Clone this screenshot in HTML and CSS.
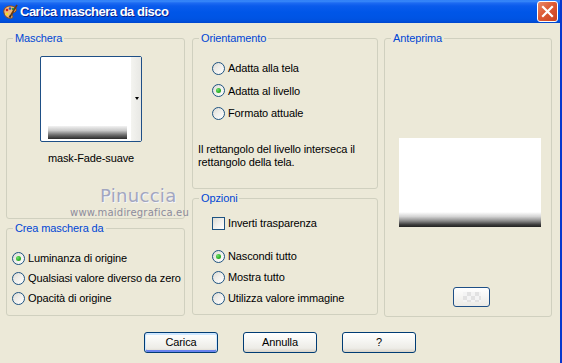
FILE: index.html
```html
<!DOCTYPE html>
<html lang="it">
<head>
<meta charset="utf-8">
<title>Carica maschera da disco</title>
<link rel="stylesheet" href="styles.css">
</head>
<body>
<div class="window">
  <div class="titlebar">
    <svg class="appicon" width="16" height="16" viewBox="0 0 16 16">
      <path d="M2 9 C1 5 4 2 8 2 C12 2 15 4 14 7 C13 9 10 8 10 10 C10 12 12 13 10 14 C6 15 3 13 2 9 Z" fill="#F0B878" stroke="#8A4A18" stroke-width="1"/>
      <circle cx="5" cy="6" r="1.3" fill="#D02020"/>
      <circle cx="8" cy="4.5" r="1.3" fill="#2050D0"/>
      <circle cx="11" cy="5" r="1.2" fill="#20A040"/>
      <circle cx="5" cy="10" r="1.3" fill="#F0E020"/>
      <path d="M15 1 L9 11" stroke="#6A3A10" stroke-width="1.6"/>
      <path d="M9 11 L7.5 13.5" stroke="#303030" stroke-width="2"/>
    </svg>
    <span class="title">Carica maschera da disco</span>
    <div class="closebtn">
      <svg width="13" height="13" viewBox="0 0 13 13"><path d="M2 2 L11 11 M11 2 L2 11" stroke="#FFFFFF" stroke-width="2.2" stroke-linecap="square"/></svg>
    </div>
  </div>

  <div class="content">
    <div class="columns">
      <div class="col col1">
        <fieldset class="grp g-mask">
          <legend>Maschera</legend>
          <div class="maskwrap">
            <div class="maskbox">
              <div class="maskthumb"><div class="maskgrad"></div></div>
              <div class="maskstrip"><span class="droparrow"></span></div>
            </div>
            <div class="masklabel">mask-Fade-suave</div>
          </div>
        </fieldset>
        <fieldset class="grp g-crea">
          <legend>Crea maschera da</legend>
          <div class="optlist crea-opts">
            <div class="opt row20"><span class="radio checked"></span><span>Luminanza di origine</span></div>
            <div class="opt row20"><span class="radio"></span><span>Qualsiasi valore diverso da zero</span></div>
            <div class="opt row20"><span class="radio"></span><span>Opacità di origine</span></div>
          </div>
        </fieldset>
      </div>

      <div class="col col2">
        <fieldset class="grp g-orient">
          <legend>Orientamento</legend>
          <div class="optlist orient-opts">
            <div class="opt row22"><span class="radio"></span><span>Adatta alla tela</span></div>
            <div class="opt row22"><span class="radio checked"></span><span>Adatta al livello</span></div>
            <div class="opt row22"><span class="radio"></span><span>Formato attuale</span></div>
          </div>
          <p class="desc">Il rettangolo del livello interseca il rettangolo della tela.</p>
        </fieldset>
        <fieldset class="grp g-opz">
          <legend>Opzioni</legend>
          <div class="optlist opz-check">
            <div class="opt row20"><span class="checkbox"></span><span>Inverti trasparenza</span></div>
          </div>
          <div class="optlist opz-opts">
            <div class="opt row21"><span class="radio checked"></span><span>Nascondi tutto</span></div>
            <div class="opt row21"><span class="radio"></span><span>Mostra tutto</span></div>
            <div class="opt row21"><span class="radio"></span><span>Utilizza valore immagine</span></div>
          </div>
        </fieldset>
      </div>

      <div class="col col3">
        <fieldset class="grp g-prev">
          <legend>Anteprima</legend>
          <div class="preview"><div class="prevgrad"></div></div>
          <div class="checkerbtn"><div class="checker"></div></div>
        </fieldset>
      </div>
    </div>

    <div class="buttons">
      <div class="btn default">Carica</div>
      <div class="btn">Annulla</div>
      <div class="btn">?</div>
    </div>
  </div>

  <div class="watermark">
    <div class="wm-name">Pinuccia</div>
    <div class="wm-url">www.maidiregrafica.eu</div>
  </div>
</div>
</body>
</html>
```

FILE: styles.css
```css
* { box-sizing: border-box; }

html, body {
  margin: 0;
  padding: 0;
  background: #ECE9D8;
}

body {
  font-family: "Liberation Sans", Arial, sans-serif;
  font-size: 11px;
  letter-spacing: -0.12px;
  color: #000;
}

.window {
  position: relative;
  width: 562px;
  height: 363px;
  background: #ECE9D8;
  border-right: 2px solid #0738CE;
  display: flex;
  flex-direction: column;
  overflow: hidden;
}

/* ---------- title bar ---------- */
.titlebar {
  height: 23px;
  flex: none;
  display: flex;
  align-items: center;
  padding-left: 2px;
  background: linear-gradient(to bottom,
    #2A78F5 0px, #3B8CFA 1px, #1D6AF2 3px, #0A5BEC 6px,
    #0056E8 12px, #0054E4 18px, #0050DD 21px, #0046CC 23px);
}

.appicon {
  flex: none;
  margin-top: 1px;
}

.title {
  margin-left: 2px;
  color: #FFFFFF;
  font-family: "Liberation Sans", Arial, sans-serif;
  font-weight: bold;
  font-size: 13px;
  letter-spacing: -0.5px;
  text-shadow: 1px 1px 0 #0A1E8C;
}

.closebtn {
  margin-left: auto;
  margin-right: 2px;
  width: 21px;
  height: 21px;
  border: 1px solid #FFFFFF;
  border-radius: 3px;
  background: linear-gradient(135deg, #E98A6A 0%, #DD5A34 45%, #C9431F 100%);
  display: flex;
  align-items: center;
  justify-content: center;
}

/* ---------- content ---------- */
.content {
  flex: 1;
  padding: 9px 0 0 6px;
  display: flex;
  flex-direction: column;
}

.columns {
  display: flex;
  align-items: flex-start;
  height: 285px;
}

.col {
  display: flex;
  flex-direction: column;
  gap: 3px;
}

.col1 { width: 179px; }
.col2 { width: 186px; margin-left: 7px; }
.col3 { width: 168px; margin-left: 6px; }

.grp {
  margin: 0;
  padding: 0;
  min-width: 0;
  border: 1px solid #D0D0BF;
  border-radius: 3px;
}

.grp legend {
  margin-left: 6px;
  padding: 0 2px;
  color: #0046D5;
  font-size: 11px;
  line-height: 13px;
}

.g-mask   { height: 187px; }
.g-crea   { height: 94px; }
.g-orient { height: 157px; }
.g-opz    { height: 123px; }
.g-prev   { height: 285px; }

/* ---------- mask picker ---------- */
.maskwrap {
  width: 102px;
  margin: 11px 0 0 33px;
}

.maskbox {
  width: 102px;
  height: 86px;
  border: 1px solid #1E4F86;
  border-radius: 2px;
  background: #FFFFFF;
  display: flex;
}

.maskthumb {
  flex: 1;
  display: flex;
  flex-direction: column;
  justify-content: flex-end;
  padding: 0 4px 2px 7px;
}

.maskgrad {
  height: 13px;
  background: linear-gradient(to bottom, #F2F2F2 0%, #C8C8C8 35%, #6A6A6A 70%, #2A2A2A 100%);
}

.maskstrip {
  width: 10px;
  background: linear-gradient(to right, #F4F4F0, #E8E8E4);
  display: flex;
  align-items: center;
  justify-content: center;
  padding-bottom: 2px;
}

.droparrow {
  width: 0;
  height: 0;
  border-left: 2.5px solid transparent;
  border-right: 2.5px solid transparent;
  border-top: 3px solid #000;
  margin-left: 1px;
}

.masklabel {
  margin-top: 10px;
  text-align: center;
  line-height: 13px;
  white-space: nowrap;
}

/* ---------- options ---------- */
.optlist {
  display: flex;
  flex-direction: column;
}

.opt {
  display: flex;
  align-items: center;
  gap: 3px;
  white-space: nowrap;
}

.row20 { height: 20px; }
.row21 { height: 21px; }
.row22 { height: 22.5px; }

.crea-opts   { padding: 13px 0 0 5px; }
.orient-opts { padding: 11.75px 0 0 19px; }
.opz-check   { padding: 8px 0 0 19px; }
.opz-opts    { padding: 12.5px 0 0 19px; }

.radio {
  flex: none;
  width: 13px;
  height: 13px;
  border: 1px solid #1D5281;
  border-radius: 50%;
  background: linear-gradient(135deg, #DCDBD3 0%, #EFEEEA 45%, #FFFFFF 100%);
  display: flex;
  align-items: center;
  justify-content: center;
}

.radio.checked::after {
  content: "";
  width: 5px;
  height: 5px;
  border-radius: 50%;
  background: radial-gradient(circle at 35% 35%, #6FE06A 0%, #2FB32B 55%, #1A8A18 100%);
}

.checkbox {
  flex: none;
  width: 13px;
  height: 13px;
  border: 1px solid #1D5281;
  background: linear-gradient(135deg, #DCDBD3 0%, #EFEEEA 45%, #FFFFFF 100%);
}

.desc {
  margin: 19px 0 0 5px;
  line-height: 13px;
  width: 170px;
}

/* ---------- preview ---------- */
.preview {
  width: 142px;
  height: 89px;
  margin: 93px 0 0 14px;
  background: #FFFFFF;
  display: flex;
  flex-direction: column;
  justify-content: flex-end;
}

.prevgrad {
  height: 15px;
  background: linear-gradient(to bottom, #FFFFFF 0%, #D4D4D4 30%, #8A8A8A 60%, #3A3A3A 85%, #222222 100%);
}

.checkerbtn {
  width: 37px;
  height: 20px;
  margin: 60px 0 0 68px;
  border: 1px solid #1E4F86;
  border-radius: 3px;
  background: linear-gradient(to bottom, #FFFFFF, #ECEBE6);
  display: flex;
  align-items: center;
  justify-content: center;
}

.checker {
  width: 18px;
  height: 10px;
  background-color: #F4F4F4;
  background-image:
    linear-gradient(45deg, #E2E2E2 25%, transparent 25%, transparent 75%, #E2E2E2 75%),
    linear-gradient(45deg, #E2E2E2 25%, transparent 25%, transparent 75%, #E2E2E2 75%);
  background-size: 8px 8px;
  background-position: 0 0, 4px 4px;
}

/* ---------- buttons ---------- */
.buttons {
  margin-top: 15px;
  margin-left: -6px;
  display: flex;
  justify-content: center;
  gap: 25px;
}

.btn {
  width: 74px;
  height: 21px;
  border: 1px solid #003C74;
  border-radius: 3px;
  background: linear-gradient(to bottom, #FFFFFF 0%, #F6F6F3 40%, #EDECE7 80%, #D8D3C8 100%);
  display: flex;
  align-items: center;
  justify-content: center;
  line-height: 13px;
}

.btn.default {
  box-shadow: inset 0 1px 0 1px #CEE7FF, inset 0 -1px 0 1px #6982EE;
}

/* ---------- watermark overlay ---------- */
.watermark {
  position: absolute;
  left: 70px;
  top: 186px;
  width: 120px;
  pointer-events: none;
}

.wm-name {
  margin-left: 30px;
  font-family: "DejaVu Sans", "Liberation Sans", sans-serif;
  font-size: 18px;
  line-height: 19px;
  color: #A2A6C0;
  text-shadow: 1px 1px 0 #F6F6FA;
  letter-spacing: 0.3px;
}

.wm-url {
  margin-top: 2px;
  font-family: "DejaVu Sans", "Liberation Sans", sans-serif;
  font-size: 10px;
  line-height: 12px;
  color: #8C8C9C;
  letter-spacing: 0.2px;
  white-space: nowrap;
}
```
